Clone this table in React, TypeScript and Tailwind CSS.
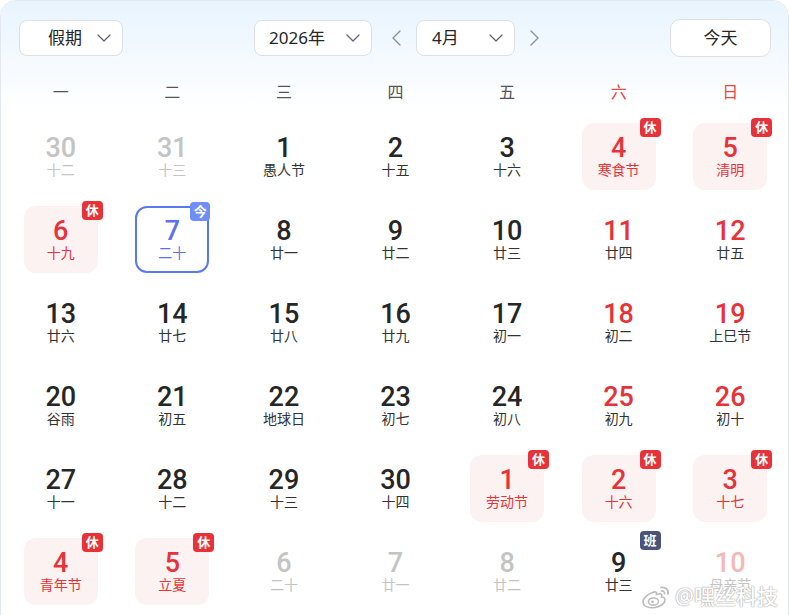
import React from 'react';

type Kind = 'normal' | 'weekend' | 'other' | 'holiday' | 'today' | 'work' | 'otherWeekend';

type Day = {
  n: number;
  lunar: string;
  kind: Kind;
};

const rows: Day[][] = [
  [
    { n: 30, lunar: '十二', kind: 'other' },
    { n: 31, lunar: '十三', kind: 'other' },
    { n: 1, lunar: '愚人节', kind: 'normal' },
    { n: 2, lunar: '十五', kind: 'normal' },
    { n: 3, lunar: '十六', kind: 'normal' },
    { n: 4, lunar: '寒食节', kind: 'holiday' },
    { n: 5, lunar: '清明', kind: 'holiday' },
  ],
  [
    { n: 6, lunar: '十九', kind: 'holiday' },
    { n: 7, lunar: '二十', kind: 'today' },
    { n: 8, lunar: '廿一', kind: 'normal' },
    { n: 9, lunar: '廿二', kind: 'normal' },
    { n: 10, lunar: '廿三', kind: 'normal' },
    { n: 11, lunar: '廿四', kind: 'weekend' },
    { n: 12, lunar: '廿五', kind: 'weekend' },
  ],
  [
    { n: 13, lunar: '廿六', kind: 'normal' },
    { n: 14, lunar: '廿七', kind: 'normal' },
    { n: 15, lunar: '廿八', kind: 'normal' },
    { n: 16, lunar: '廿九', kind: 'normal' },
    { n: 17, lunar: '初一', kind: 'normal' },
    { n: 18, lunar: '初二', kind: 'weekend' },
    { n: 19, lunar: '上巳节', kind: 'weekend' },
  ],
  [
    { n: 20, lunar: '谷雨', kind: 'normal' },
    { n: 21, lunar: '初五', kind: 'normal' },
    { n: 22, lunar: '地球日', kind: 'normal' },
    { n: 23, lunar: '初七', kind: 'normal' },
    { n: 24, lunar: '初八', kind: 'normal' },
    { n: 25, lunar: '初九', kind: 'weekend' },
    { n: 26, lunar: '初十', kind: 'weekend' },
  ],
  [
    { n: 27, lunar: '十一', kind: 'normal' },
    { n: 28, lunar: '十二', kind: 'normal' },
    { n: 29, lunar: '十三', kind: 'normal' },
    { n: 30, lunar: '十四', kind: 'normal' },
    { n: 1, lunar: '劳动节', kind: 'holiday' },
    { n: 2, lunar: '十六', kind: 'holiday' },
    { n: 3, lunar: '十七', kind: 'holiday' },
  ],
  [
    { n: 4, lunar: '青年节', kind: 'holiday' },
    { n: 5, lunar: '立夏', kind: 'holiday' },
    { n: 6, lunar: '二十', kind: 'other' },
    { n: 7, lunar: '廿一', kind: 'other' },
    { n: 8, lunar: '廿二', kind: 'other' },
    { n: 9, lunar: '廿三', kind: 'work' },
    { n: 10, lunar: '母亲节', kind: 'otherWeekend' },
  ],
];

const weekdays = ['一', '二', '三', '四', '五', '六', '日'];

function ChevronDown() {
  return (
    <svg width="14" height="8" viewBox="0 0 14 8" fill="none">
      <path d="M1 1l6 6 6-6" stroke="#5f6673" strokeWidth="1.3" strokeLinecap="round" strokeLinejoin="round" />
    </svg>
  );
}

function ChevronSide({ dir }: { dir: 'left' | 'right' }) {
  return (
    <svg width="9" height="16" viewBox="0 0 9 16" fill="none">
      <path
        d={dir === 'left' ? 'M8 1L1 8l7 7' : 'M1 1l7 7-7 7'}
        stroke="#8891a3"
        strokeWidth="1.4"
        strokeLinecap="round"
        strokeLinejoin="round"
      />
    </svg>
  );
}

function WeiboLogo() {
  return (
    <svg width="32" height="26" viewBox="0 0 32 26" fill="none">
      <path
        d="M12.5 8.5c-5 1.5-10 6-9.5 10s6 6 12 5 10-4.5 10-7.5-2.5-3-3.5-3c1-2.5-.5-4-3-3l-2 .5c.5-2-.5-3.5-4-2z"
        fill="#ffffff"
        stroke="#bcbcbc"
        strokeWidth="1.6"
      />
      <ellipse cx="13.5" cy="17.5" rx="5" ry="3.6" fill="#ffffff" stroke="#bcbcbc" strokeWidth="1.5" />
      <circle cx="12.5" cy="17.8" r="1.4" fill="#bcbcbc" />
      <path d="M21 3.5c4-1 8 2 7 6.5" stroke="#bcbcbc" strokeWidth="1.8" strokeLinecap="round" />
      <path d="M21.5 7c1.8-.4 3.4 1 3 2.8" stroke="#bcbcbc" strokeWidth="1.6" strokeLinecap="round" />
    </svg>
  );
}

function DayCell({ day }: { day: Day }) {
  let box = '';
  let num = 'text-[#262626]';
  let lunar = 'text-[#333333]';
  let badge: React.ReactNode = null;

  if (day.kind === 'weekend') {
    num = 'text-[#e8323a]';
  } else if (day.kind === 'other') {
    num = 'text-[#c4c4c4]';
    lunar = 'text-[#c4c4c4]';
  } else if (day.kind === 'otherWeekend') {
    num = 'text-[#f6b7b7]';
    lunar = 'text-[#c4c4c4]';
  } else if (day.kind === 'holiday') {
    box = 'bg-[#fdf2f2]';
    num = 'text-[#e8323a]';
    lunar = 'text-[#e8323a]';
    badge = (
      <span className="absolute -right-[5px] -top-[5px] w-[21px] h-[19px] rounded-[4px] bg-[#e8323a] text-white text-[13px] font-bold leading-[19px] text-center">
        休
      </span>
    );
  } else if (day.kind === 'today') {
    box = 'border-2 border-[#5a78ef]';
    num = 'text-[#5a72ec]';
    lunar = 'text-[#5a72ec]';
    badge = (
      <span className="absolute -right-[3px] -top-[6px] w-[20px] h-[19px] rounded-[4px] bg-[#6f8ef7] text-white text-[13px] font-bold leading-[19px] text-center">
        今
      </span>
    );
  } else if (day.kind === 'work') {
    badge = (
      <span className="absolute -right-[5px] -top-[7px] w-[21px] h-[19px] rounded-[4px] bg-[#4a5478] text-white text-[13px] font-bold leading-[19px] text-center">
        班
      </span>
    );
  }

  return (
    <div className="h-[83px] flex items-center justify-center">
      <div className={`relative w-[74px] h-[67px] rounded-[12px] flex flex-col items-center justify-center pb-[2px] ${box}`}>
        {badge}
        <div className={`font-['Roboto'] font-medium text-[27px] leading-[28px] ${num}`}>{day.n}</div>
        <div className={`text-[14px] leading-[16px] ${lunar}`}>{day.lunar}</div>
      </div>
    </div>
  );
}

export default function App() {
  return (
    <div className="w-[789px] h-[615px] overflow-hidden bg-white font-['Noto_Sans','Noto_Sans_CJK_SC',sans-serif]">
      <div className="relative h-[640px] border border-[#e3e8ef] rounded-t-[16px] overflow-hidden">
        <div className="bg-gradient-to-b from-[#e8f4fe] to-white">
          <div className="flex items-center justify-between pl-[18px] pr-[17px] pt-[18px]">
            <button className="w-[104px] h-[36px] rounded-[8px] border border-[#dcdfe6] bg-white flex items-center pl-[28px] pr-[11px] justify-between">
              <span className="text-[17px] text-[#262626]">假期</span>
              <ChevronDown />
            </button>

            <div className="flex items-center">
              <button className="w-[118px] h-[36px] rounded-[8px] border border-[#dcdfe6] bg-white flex items-center pl-[14px] pr-[11px] justify-between">
                <span className="text-[17px] text-[#262626]">2026年</span>
                <ChevronDown />
              </button>
              <span className="ml-[20px] mr-[15px] flex items-center">
                <ChevronSide dir="left" />
              </span>
              <button className="w-[99px] h-[36px] rounded-[8px] border border-[#dcdfe6] bg-white flex items-center pl-[15px] pr-[11px] justify-between">
                <span className="text-[17px] text-[#262626]">4月</span>
                <ChevronDown />
              </button>
              <span className="ml-[15px] flex items-center">
                <ChevronSide dir="right" />
              </span>
            </div>

            <button className="w-[101px] h-[38px] rounded-[10px] border border-[#dcdfe6] bg-white flex items-center justify-center">
              <span className="text-[17px] text-[#262626]">今天</span>
            </button>
          </div>

          <div className="grid grid-cols-7 pl-[4px] pr-[2px] mt-[16px] h-[38px] items-center">
            {weekdays.map((w, i) => (
              <div key={w} className={`text-center text-[16px] ${i >= 5 ? 'text-[#ec4646]' : 'text-[#555555]'}`}>
                {w}
              </div>
            ))}
          </div>
        </div>

        <div className="grid grid-cols-7 pl-[4px] pr-[2px] mt-[4px]">
          {rows.flat().map((d, i) => (
            <DayCell key={i} day={d} />
          ))}
        </div>

        <div className="absolute right-[10px] top-[580px] flex items-center gap-[3px]">
          <WeiboLogo />
          <span className="text-[21px] font-medium text-white [text-shadow:0_0_1px_#9a9a9a,0_0_2px_#b0b0b0]">
            @嘿丝科技
          </span>
        </div>
      </div>
    </div>
  );
}
